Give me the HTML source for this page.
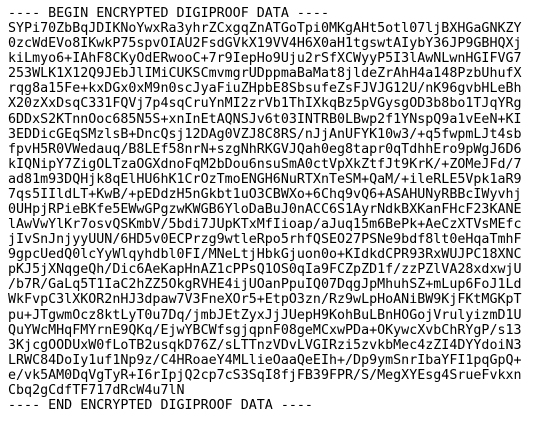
<!DOCTYPE html>
<html><head><meta charset="utf-8"><style>
html,body{margin:0;padding:0;background:#fff;}
body{margin:6px 8px 0 8px;}
pre{margin:0;font-family:"DejaVu Sans Mono",monospace;font-size:13.33px;line-height:15.08px;color:#000;}
</style></head><body><pre>---- BEGIN ENCRYPTED DIGIPROOF DATA ----
SYPi70ZbBqJDIKNoYwxRa3yhrZCxgqZnATGoTpi0MKgAHt5otl07ljBXHGaGNKZY
0zcWdEVo8IKwkP75spvOIAU2FsdGVkX19VV4H6X0aH1tgswtAIybY36JP9GBHQXj
kiLmyo6+IAhF8CKyOdERwooC+7r9IepHo9Uju2rSfXCWyyP5I3lAwNLwnHGIFVG7
253WLK1X12Q9JEbJlIMiCUKSCmvmgrUDppmaBaMat8jldeZrAhH4a148PzbUhufX
rqg8a15Fe+kxDGx0xM9n0scJyaFiuZHpbE8SbsufeZsFJVJG12U/nK96gvbHLeBh
X20zXxDsqC331FQVj7p4sqCruYnMI2zrVb1ThIXkqBz5pVGysgOD3b8bo1TJqYRg
6DDxS2KTnnOoc685N5S+xnInEtAQNSJv6t03INTRB0LBwp2f1YNspQ9a1vEeN+KI
3EDDicGEqSMzlsB+DncQsj12DAg0VZJ8C8RS/nJjAnUFYK10w3/+q5fwpmLJt4sb
fpvH5R0VWedauq/B8LEf58nrN+szgNhRKGVJQah0eg8tapr0qTdhhEro9pWgJ6D6
kIQNipY7ZigOLTzaOGXdnoFqM2bDou6nsuSmA0ctVpXkZtfJt9KrK/+ZOMeJFd/7
ad81m93DQHjk8qElHU6hK1CrOzTmoENGH6NuRTXnTeSM+QaM/+ileRLE5Vpk1aR9
7qs5IIldLT+KwB/+pEDdzH5nGkbt1uO3CBWXo+6Chq9vQ6+ASAHUNyRBBcIWyvhj
0UHpjRPieBKfe5EWwGPgzwKWGB6YloDaBuJ0nACC6S1AyrNdkBXKanFHcF23KANE
lAwVwYlKr7osvQSKmbV/5bdi7JUpKTxMfIioap/aJuq15m6BePk+AeCzXTVsMEfc
jIvSnJnjyyUUN/6HD5v0ECPrzg9wtleRpo5rhfQSEO27PSNe9bdf8lt0eHqaTmhF
9gpcUedQ0lcYyWlqyhdbl0FI/MNeLtjHbkGjuon0o+KIdkdCPR93RxWUJPC18XNC
pKJ5jXNqgeQh/Dic6AeKapHnAZ1cPPsQ1OS0qIa9FCZpZD1f/zzPZlVA28xdxwjU
/b7R/GaLq5T1IaC2hZZ5OkgRVHE4ijUOanPpuIQ07DqgJpMhuhSZ+mLup6FoJ1Ld
WkFvpC3lXKOR2nHJ3dpaw7V3FneXOr5+EtpO3zn/Rz9wLpHoANiBW9KjFKtMGKpT
pu+JTgwmOcz8ktLyT0u7Dq/jmbJEtZyxJjJUepH9KohBuLBnHOGojVrulyizmD1U
QuYWcMHqFMYrnE9QKq/EjwYBCWfsgjqpnF08geMCxwPDa+OKywcXvbChRYgP/s13
3KjcgOODUxW0fLoTB2usqkD76Z/sLTTnzVDvLVGIRzi5zvkbMec4zZI4DYYdoiN3
LRWC84DoIy1uf1Np9z/C4HRoaeY4MLlieOaaQeEIh+/Dp9ymSnrIbaYFI1pqGpQ+
e/vk5AM0DqVgTyR+I6rIpjQ2cp7cS3SqI8fjFB39FPR/S/MegXYEsg4SrueFvkxn
Cbq2gCdfTF717dRcW4u7lN
---- END ENCRYPTED DIGIPROOF DATA ----</pre></body></html>
